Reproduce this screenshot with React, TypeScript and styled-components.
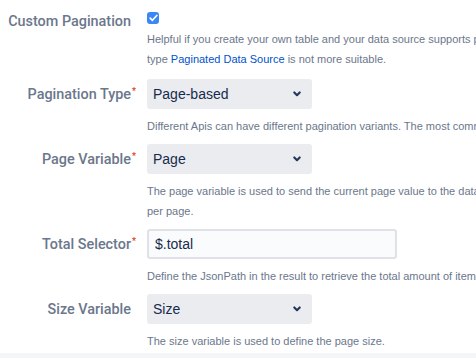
import React from 'react';
import styled, { createGlobalStyle } from 'styled-components';

const GlobalStyle = createGlobalStyle`
  html, body {
    margin: 0;
    padding: 0;
    background: #ffffff;
    overflow: hidden;
  }
  body {
    font-family: "Liberation Sans", Arial, sans-serif;
    -webkit-font-smoothing: antialiased;
  }
`;

const Page = styled.div`
  width: 476px;
  height: 358px;
  overflow: hidden;
  display: flex;
  flex-direction: column;
  background: #ffffff;
`;

const Form = styled.div`
  flex: 1;
  display: grid;
  grid-template-columns: 131px 700px;
  column-gap: 16px;
  row-gap: 8px;
  padding-top: 10px;
  align-content: start;
`;

const Label = styled.div<{ $required?: boolean; $tall?: boolean }>`
  position: relative;
  height: ${({ $tall }) => ($tall ? '23px' : '30px')};
  display: flex;
  align-items: center;
  justify-content: flex-end;
  font-family: Roboto, "Liberation Sans", sans-serif;
  font-size: 14.4px;
  font-weight: 500;
  color: #6b778c;
  white-space: nowrap;

  ${({ $required }) =>
    $required &&
    `
    &::after {
      content: '*';
      position: absolute;
      right: -5px;
      top: 7px;
      font-size: 9px;
      color: #de350b;
    }
  `}
`;

const Field = styled.div<{ $first?: boolean }>`
  display: flex;
  flex-direction: column;
  align-items: flex-start;
  margin-bottom: ${({ $first }) => ($first ? '2px' : '0')};
`;

const CheckRow = styled.div`
  height: 19px;
  display: flex;
  align-items: center;
`;

const CheckBox = styled.span`
  width: 12px;
  height: 12px;
  border-radius: 3px;
  background: #3b88f5;
  display: flex;
  align-items: center;
  justify-content: center;
  margin-top: -3px;
`;

const Select = styled.div`
  box-sizing: border-box;
  width: 165px;
  height: 30px;
  border-radius: 3px;
  background: #ebecf0;
  display: flex;
  align-items: center;
  justify-content: space-between;
  padding: 0 11px 0 6px;
  font-size: 14px;
  color: #172b4d;
`;

const TextInput = styled.div`
  box-sizing: border-box;
  width: 250px;
  height: 30px;
  border-radius: 3px;
  border: 2px solid #dfe1e6;
  background: #fafbfc;
  display: flex;
  align-items: center;
  padding: 0 6px;
  font-size: 14px;
  color: #172b4d;
`;

const Help = styled.div<{ $flush?: boolean }>`
  margin-top: ${({ $flush }) => ($flush ? '0' : '7px')};
  font-size: 11px;
  line-height: 20px;
  color: #6b778c;
  white-space: nowrap;
`;

const Link = styled.a`
  color: #0052cc;
  text-decoration: none;
`;

const Footer = styled.div`
  height: 5px;
  background: #f4f5f7;
`;

const Chevron = () => (
  <svg width="8" height="6" viewBox="0 0 8 6">
    <path d="M1.3 1.4 L4 4.2 L6.7 1.4" fill="none" stroke="#253858" strokeWidth="2.1" strokeLinecap="round" strokeLinejoin="round" />
  </svg>
);

const Check = () => (
  <svg width="9" height="8" viewBox="0 0 9 8">
    <path d="M1.2 4.2 L3.4 6.3 L7.8 1.5" fill="none" stroke="#ffffff" strokeWidth="1.7" strokeLinecap="round" strokeLinejoin="round" />
  </svg>
);

const App: React.FC = () => {
  return (
    <Page>
      <GlobalStyle />
      <Form>
        <Label $tall>Custom Pagination</Label>
        <Field $first>
          <CheckRow>
            <CheckBox>
              <Check />
            </CheckBox>
          </CheckRow>
          <Help $flush>
            Helpful if you create your own table and your data source supports pagination natively and the default
            <br />
            type <Link href="#">Paginated Data Source</Link> is not more suitable.
          </Help>
        </Field>

        <Label $required>Pagination Type</Label>
        <Field>
          <Select>
            Page-based
            <Chevron />
          </Select>
          <Help>Different Apis can have different pagination variants. The most common ones are supported here.</Help>
        </Field>

        <Label $required>Page Variable</Label>
        <Field>
          <Select>
            Page
            <Chevron />
          </Select>
          <Help>
            The page variable is used to send the current page value to the data source, e.g. the page number or the offset
            <br />
            per page.
          </Help>
        </Field>

        <Label $required>Total Selector</Label>
        <Field>
          <TextInput>$.total</TextInput>
          <Help>Define the JsonPath in the result to retrieve the total amount of items.</Help>
        </Field>

        <Label>Size Variable</Label>
        <Field>
          <Select>
            Size
            <Chevron />
          </Select>
          <Help>The size variable is used to define the page size.</Help>
        </Field>
      </Form>
      <Footer />
    </Page>
  );
};

export default App;
